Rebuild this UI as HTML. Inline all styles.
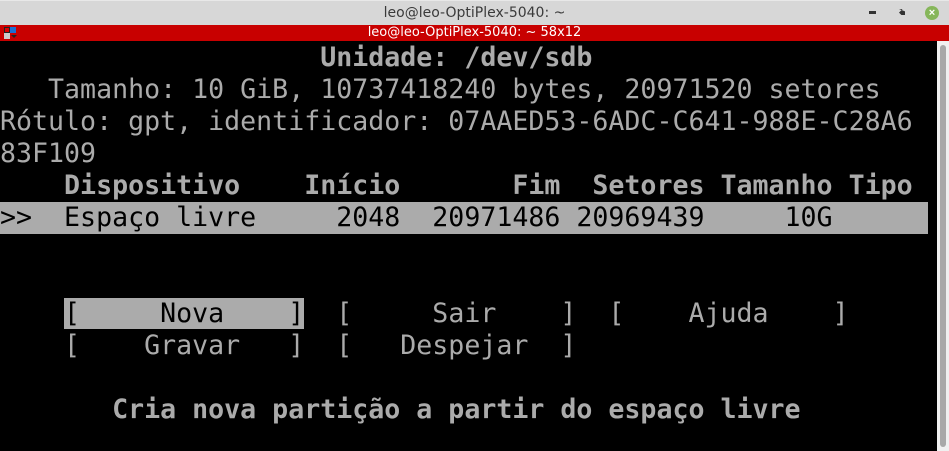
<!DOCTYPE html>
<html><head><meta charset="utf-8"><style>
*{margin:0;padding:0}
body{width:949px;height:451px;overflow:hidden;background:#000;position:relative;font-family:"DejaVu Sans Mono",monospace}
#tb{position:absolute;left:0;top:0;width:949px;height:25px;background:#d7d7d7;border-top:1px solid #e8e8e8;box-sizing:border-box}
#tb .t{position:absolute;left:0;width:949px;top:4px;text-align:center;font:14px "DejaVu Sans",sans-serif;color:#3a3a3a}
#rb{position:absolute;left:0;top:25px;width:949px;height:16px;background:#c80000}
#rb .t{position:absolute;left:0;width:949px;top:0px;text-align:center;font:13px "DejaVu Sans",sans-serif;color:#fff;line-height:16px}
#term{position:absolute;left:0;top:42px;width:936px;height:409px}
.r{position:absolute;left:0;height:32px;line-height:32px;font-size:26.6px;color:#ababab;white-space:pre}
.b{font-weight:bold}
.hl{background:#ababab;color:#000}
#sb{position:absolute;left:937px;top:41px;width:12px;height:410px;background:#f0f0f0}
#sb div{position:absolute;left:3px;top:4px;width:6px;height:402px;background:#a8a8a8;border-radius:3px}
</style></head><body>
<div id="tb"><div class="t">leo@leo-OptiPlex-5040: ~</div>
<div style="position:absolute;left:869px;top:10px;width:7px;height:3px;background:#333"></div>
<div style="position:absolute;left:899px;top:8px;width:6px;height:6px;background:#333;clip-path:polygon(0 0,60% 0,0 60%,40% 100%,100% 100%,100% 40%)"></div>
<div style="position:absolute;left:925px;top:5px;width:14px;height:14px;border-radius:50%;background:#86b65a;color:#fff;font:bold 11px sans-serif;text-align:center;line-height:14px">×</div>
</div>
<div id="rb"><div class="t">leo@leo-OptiPlex-5040: ~ 58x12</div>
<div style="position:absolute;left:4px;top:2px;width:6px;height:6px;background:#d00;border:1px solid #222;box-sizing:border-box"></div>
<div style="position:absolute;left:10px;top:2px;width:6px;height:6px;background:#1b6fd1"></div>
<div style="position:absolute;left:4px;top:8px;width:6px;height:6px;background:#ccc"></div>
<div style="position:absolute;left:11px;top:10px;width:0;height:0;border-left:3px solid transparent;border-right:3px solid transparent;border-top:3px solid #222"></div>
</div>
<div id="term">
<div class="r b" style="top:0">                    Unidade: /dev/sdb</div>
<div class="r" style="top:32px">   Tamanho: 10 GiB, 10737418240 bytes, 20971520 setores</div>
<div class="r" style="top:64px">Rótulo: gpt, identificador: 07AAED53-6ADC-C641-988E-C28A6</div>
<div class="r" style="top:96px">83F109</div>
<div class="r b" style="top:128px">    Dispositivo    Início       Fim  Setores Tamanho Tipo</div>
<div class="r hl" style="top:160px;width:928px">&gt;&gt;  Espaço livre     2048  20971486 20969439     10G</div>
<div class="r" style="top:256px">    <span class="hl">[     Nova    ]</span>  [     Sair    ]  [    Ajuda    ]</div>
<div class="r" style="top:288px">    [    Gravar   ]  [   Despejar  ]</div>
<div class="r b" style="top:352px">       Cria nova partição a partir do espaço livre</div>
</div>
<div id="sb"><div></div></div>
</body></html>
